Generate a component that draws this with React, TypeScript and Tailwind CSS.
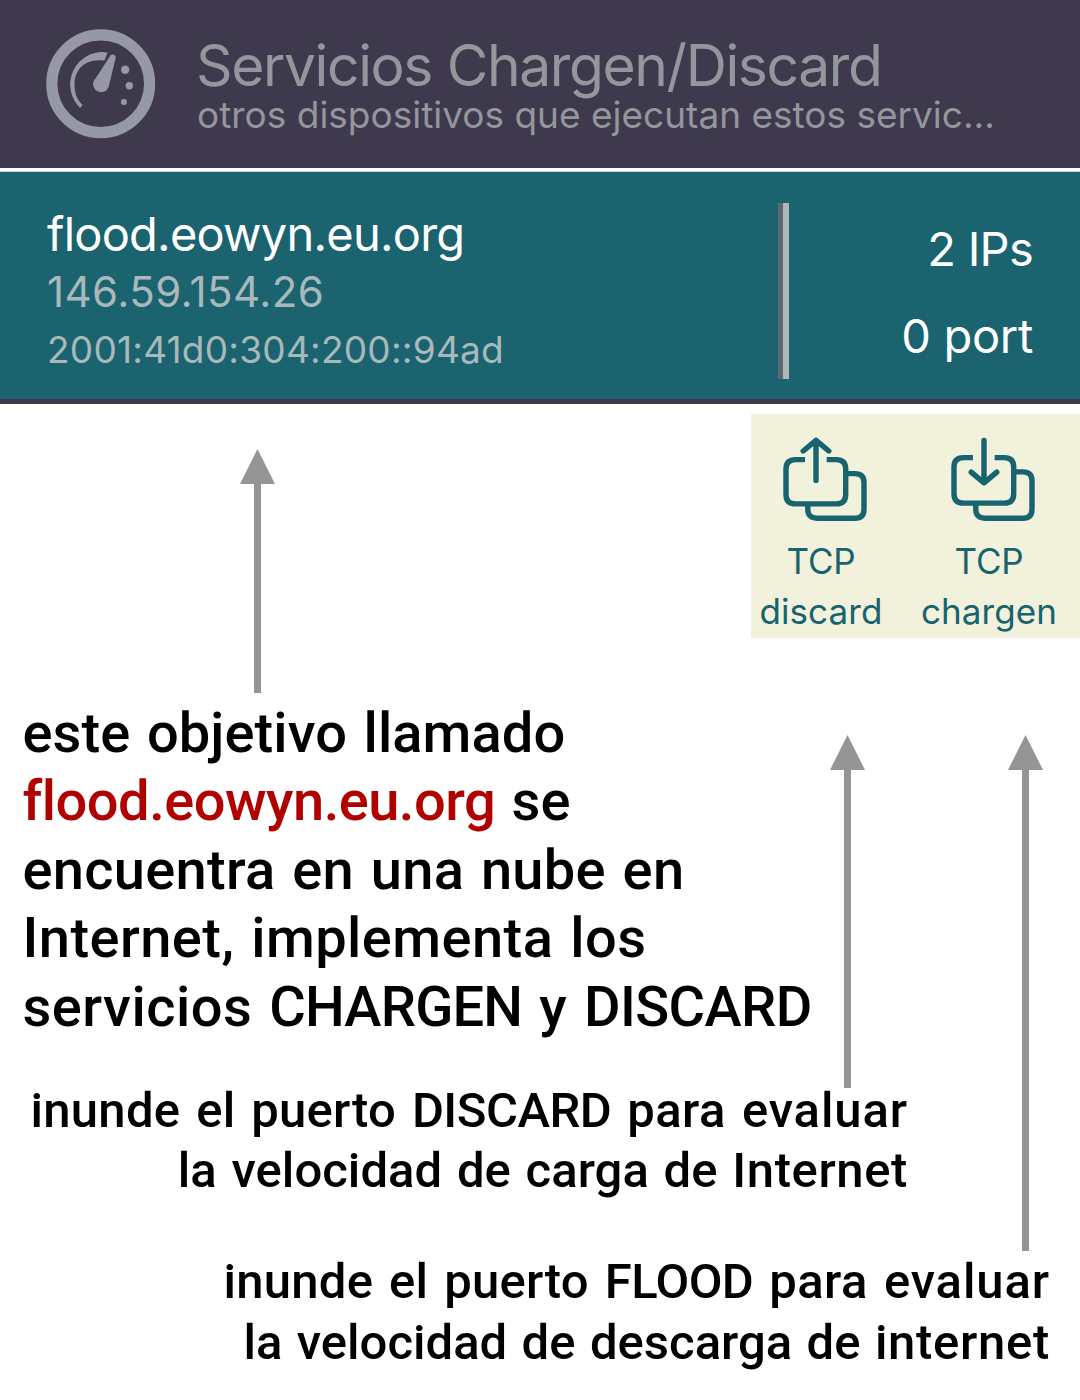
import React from "react";

function GaugeIcon() {
  return (
    <svg className="h-[110px] w-[110px] shrink-0" viewBox="45.5 28.7 110 110" fill="#9698a5">
      <circle cx="100.2" cy="83.4" r="48.9" fill="none" stroke="#9698a5" strokeWidth="11.2" />
      <path d="M107 52.2 A32.4 32.4 0 0 0 79.6 107.6 L82 104.8 A27.5 27.5 0 0 1 74 84 C74 70 84 57.5 104 60.3 Z" />
      <path d="M109.3 56.3 A3 3 0 0 1 115 58.2 L108.4 85.8 A8 8 0 1 1 95.2 78 Z" />
      <circle cx="124.7" cy="69.4" r="4.2" />
      <circle cx="128.8" cy="85.4" r="3.7" />
      <circle cx="123.4" cy="101.6" r="3" />
    </svg>
  );
}

function UploadIcon() {
  return (
    <svg className="h-[122px] w-[140px]" viewBox="0 0 140 122" fill="none" stroke="#17636f" strokeWidth="5.4">
      <path d="M54 45.6 H44.5 C38 45.6 35 49 35 55 V80.5 C35 86.5 38 89.9 44.5 89.9 H85.2 C91.7 89.9 94.7 86.5 94.7 80.5 V55 C94.7 49 91.7 45.6 85.2 45.6 H75.7" />
      <path d="M96 59.6 H104 C110 59.6 113 62.6 113 68.6 V95.2 C113 101.2 110 104.2 104 104.2 H65.8 C59.8 104.2 56.8 101.2 56.8 95.2 V91" />
      <path d="M65 26.4 V66.4 M52.2 37 L65 26.4 L77.8 37" strokeLinecap="round" strokeLinejoin="round" />
    </svg>
  );
}

function DownloadIcon() {
  return (
    <svg className="h-[122px] w-[140px]" viewBox="0 0 140 122" fill="none" stroke="#17636f" strokeWidth="5.4">
      <path d="M54 43.6 H44.5 C38 43.6 35 47 35 53 V79.7 C35 85.7 38 89.1 44.5 89.1 H85.2 C91.7 89.1 94.7 85.7 94.7 79.7 V53 C94.7 47 91.7 43.6 85.2 43.6 H75.7" />
      <path d="M96 57.9 H104 C110 57.9 113 60.9 113 66.9 V95.2 C113 101.2 110 104.2 104 104.2 H65.8 C59.8 104.2 56.8 101.2 56.8 95.2 V91" />
      <path d="M65 26.4 V68.4 M52.2 58.2 L65 68.8 L77.8 58.2" strokeLinecap="round" strokeLinejoin="round" />
    </svg>
  );
}

function Arrow({ length, className }: { length: number; className: string }) {
  return (
    <svg className={className} width="36" height={length} viewBox={`0 0 36 ${length}`} fill="#959595">
      <path d={`M17.5 0 L35 35 H21 V${length} H14 V35 H0 Z`} />
    </svg>
  );
}

export default function App() {
  return (
    <div className="relative h-[1400px] w-[1080px] overflow-hidden bg-white font-['Inter',sans-serif] whitespace-nowrap text-black">
      <header className="flex h-[168px] bg-[#3e394d] pt-[29px] pl-[46px]">
        <GaugeIcon />
        <div className="pt-[7px] pl-[40px] text-[#93969b]">
          <h1 className="text-[57px] leading-[60px] tracking-[-1.4px]">Servicios Chargen/Discard</h1>
          <p className="ml-[1px] text-[37px] leading-[38px]">otros dispositivos que ejecutan estos servic...</p>
        </div>
      </header>

      <section className="mt-[3px] flex h-[233px] justify-between border-t border-b-[5px] border-t-[#c9d6d8] border-b-[#3e394d] bg-[#1a636f] pr-[47px] pl-[47px]">
        <div className="w-[731px] pt-[33px] text-[#a8b9bb]">
          <div className="text-[47px] leading-[58px] tracking-[-0.76px] text-white">flood.eowyn.eu.org</div>
          <div className="text-[42px] leading-[58px] tracking-[0.45px]">146.59.154.26</div>
          <div className="text-[37px] leading-[58px] tracking-[0.24px] [font-feature-settings:'calt'_0]">2001:41d0:304:200::94ad</div>
        </div>
        <div className="mt-[31px] h-[176px] w-[11px] border-r-[6px] border-r-[#abb9ba] bg-[#5f6672]" />
        <div className="flex-1 pt-[33px] text-right text-[47px] leading-[87px] text-white">
          <div className="tracking-[-0.7px]">2 IPs</div>
          <div className="tracking-[-0.3px]">0 port</div>
        </div>
      </section>

      <section className="flex h-[294px] justify-between">
        <Arrow length={244} className="mt-[45px] ml-[240px]" />
        <div className="mt-[10px] flex h-[224px] w-[329px] gap-[28px] bg-[#f2f1dc] text-center text-[35px] leading-[50px] text-[#17636f]">
          <div className="w-[140px]">
            <UploadIcon />
            <div className="tracking-[-0.2px]">TCP</div>
            <div className="tracking-[0.1px]">discard</div>
          </div>
          <div className="w-[140px]">
            <DownloadIcon />
            <div className="tracking-[-0.2px]">TCP</div>
            <div className="tracking-[0.1px]">chargen</div>
          </div>
        </div>
      </section>

      <section className="h-[383px] pt-[1px] pl-[22.5px] font-['Roboto',sans-serif] text-[56px] leading-[68.4px] font-medium [word-spacing:2.5px]">
        <div className="tracking-[0.1px]">este objetivo llamado</div>
        <div>
          <span className="tracking-[-0.5px] text-[#b10000]">flood.eowyn.eu.org</span> se
        </div>
        <div className="tracking-[0.3px]">encuentra en una nube en</div>
        <div className="tracking-[0.45px]">Internet, implementa los</div>
        <div className="tracking-[0.5px]">
          servicios <span className="tracking-[-0.8px]">CHARGEN</span> y <span className="tracking-[-0.6px]">DISCARD</span>
        </div>
      </section>

      <section className="w-[908px] text-right font-['Roboto',sans-serif] text-[49px] leading-[60.4px] font-medium [word-spacing:2.5px]">
        <div className="tracking-[0.25px] [word-spacing:3.5px]">
          inunde el puerto <span className="tracking-[-0.5px]">DISCARD</span> <span className="tracking-[0.5px]">para</span>{" "}
          <span className="tracking-[0.9px]">evaluar</span>
        </div>
        <div className="tracking-[0.05px]">
          la velocidad de carga de <span className="tracking-[0.6px]">Internet</span>
        </div>
      </section>

      <section className="mt-[50.6px] w-[1050px] text-right font-['Roboto',sans-serif] text-[49px] leading-[60.4px] font-medium [word-spacing:2.2px]">
        <div className="tracking-[0.25px] [word-spacing:3.5px]">
          inunde el puerto <span className="tracking-[-0.6px]">FLOOD</span> <span className="tracking-[0.5px]">para</span>{" "}
          <span className="tracking-[0.9px]">evaluar</span>
        </div>
        <div className="tracking-[0.02px]">
          la velocidad de descarga de <span className="tracking-[0.7px]">internet</span>
        </div>
      </section>

      <Arrow length={353} className="absolute top-[735px] left-[830px]" />
      <Arrow length={516} className="absolute top-[735px] left-[1008px]" />
    </div>
  );
}
